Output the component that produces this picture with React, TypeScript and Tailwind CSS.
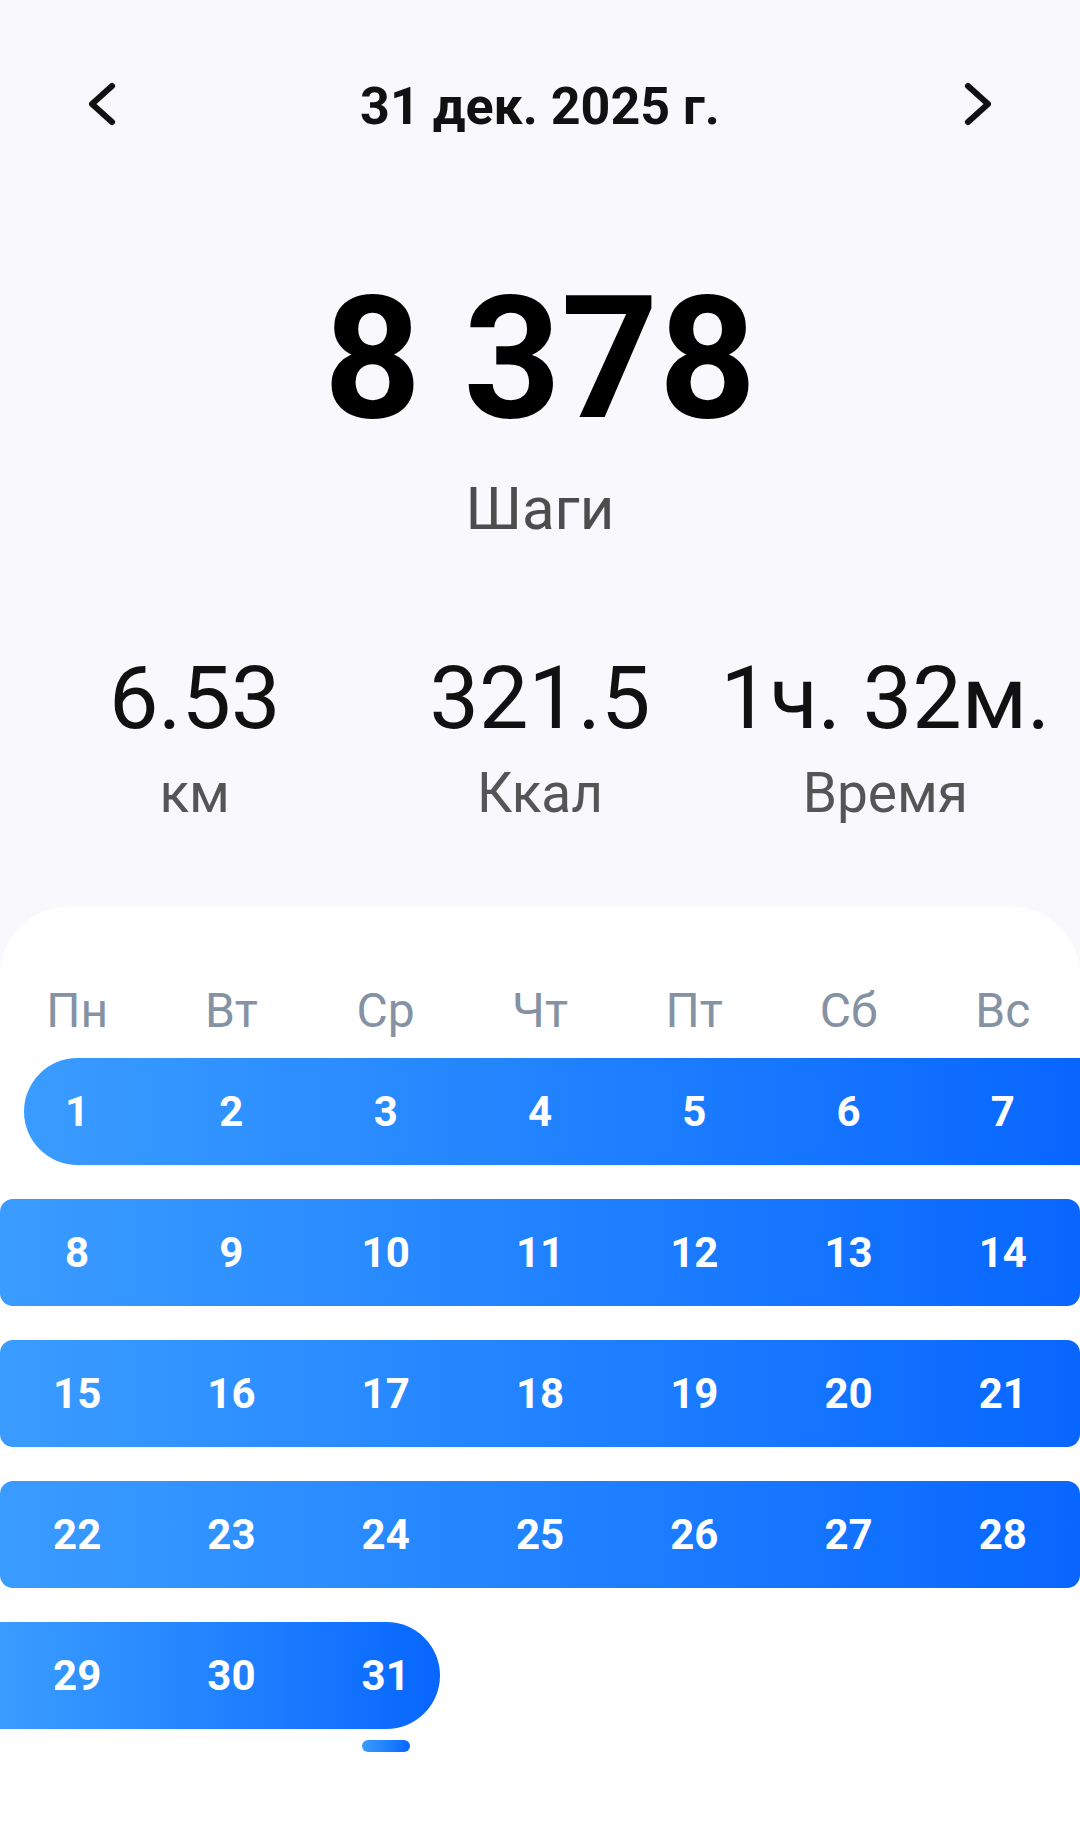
import React from "react";

const weekDays = ["Пн", "Вт", "Ср", "Чт", "Пт", "Сб", "Вс"];

const weeks = [
  [1, 2, 3, 4, 5, 6, 7],
  [8, 9, 10, 11, 12, 13, 14],
  [15, 16, 17, 18, 19, 20, 21],
  [22, 23, 24, 25, 26, 27, 28],
  [29, 30, 31],
];

function Chevron({ dir }: { dir: "left" | "right" }) {
  return (
    <button className="flex h-full w-20 items-center justify-center">
      <svg width="80" height="86" viewBox="0 0 80 86" fill="none">
        <polyline
          points={dir === "left" ? "50,22 30,40 50,58" : "30,22 50,40 30,58"}
          stroke="#111111"
          strokeWidth="6"
          strokeLinecap="round"
          strokeLinejoin="round"
        />
      </svg>
    </button>
  );
}

function Stat({ value, label }: { value: string; label: string }) {
  return (
    <div className="flex flex-col items-center">
      <span className="whitespace-nowrap text-[88px] leading-none text-[#111111]">{value}</span>
      <span className="mt-[24px] text-[55px] leading-none text-[#555555]">{label}</span>
    </div>
  );
}

function DayGrid({ days }: { days: number[] }) {
  return (
    <div className="grid h-full w-[1080px] grid-cols-7 items-center">
      {days.map((d) => (
        <span key={d} className="text-center text-[42px] font-bold leading-none text-white">
          {d}
        </span>
      ))}
    </div>
  );
}

export default function App() {
  return (
    <div
      className="flex min-h-[1824px] flex-col bg-[#f8f8fd]"
      style={{ fontFamily: "Roboto, 'Noto Sans', sans-serif" }}
    >
      {/* date switcher */}
      <header className="mt-[64px] flex h-[86px] items-center justify-between px-[62px]">
        <Chevron dir="left" />
        <h1 className="text-[52px] font-bold leading-none text-[#111111]">31 дек. 2025 г.</h1>
        <Chevron dir="right" />
      </header>

      {/* steps */}
      <div className="mt-[124px] flex flex-col items-center">
        <span className="text-[170px] font-bold leading-none text-black">8 378</span>
        <span className="mt-[35px] text-[60px] leading-none text-[#4d4d4d]">Шаги</span>
      </div>

      <div className="mt-[115px] grid grid-cols-3 px-[22px]">
        <Stat value="6.53" label="км" />
        <Stat value="321.5" label="Ккал" />
        <Stat value="1ч. 32м." label="Время" />
      </div>

      {/* month calendar */}
      <section className="mt-[86px] flex-1 rounded-t-[68px] bg-white pt-[80px]">
        <div className="grid grid-cols-7">
          {weekDays.map((w) => (
            <span key={w} className="text-center text-[48px] leading-none text-[#8592a3]">
              {w}
            </span>
          ))}
        </div>

        <div className="mt-[23px] flex flex-col gap-[34px]">
          {weeks.map((days, i) => {
            if (i === 0) {
              return (
                <div
                  key={i}
                  className="ml-[23.5px] h-[107px] rounded-l-full rounded-r-[13px] bg-gradient-to-r from-[#3a9cff] to-[#0866ff]"
                >
                  <div className="-ml-[23.5px] h-full">
                    <DayGrid days={days} />
                  </div>
                </div>
              );
            }
            if (i === weeks.length - 1) {
              return (
                <div
                  key={i}
                  className="h-[107px] w-[440px] rounded-l-[13px] rounded-r-full bg-gradient-to-r from-[#3a9cff] to-[#0866ff]"
                >
                  <DayGrid days={days} />
                </div>
              );
            }
            return (
              <div
                key={i}
                className="h-[107px] rounded-[13px] bg-gradient-to-r from-[#3a9cff] to-[#0866ff]"
              >
                <DayGrid days={days} />
              </div>
            );
          })}
        </div>

        <div className="mt-[11px] grid grid-cols-7">
          <div className="col-start-3 flex justify-center">
            <div className="h-[12px] w-[48px] rounded-full bg-gradient-to-r from-[#3a9cff] to-[#0866ff]" />
          </div>
        </div>
      </section>
    </div>
  );
}
